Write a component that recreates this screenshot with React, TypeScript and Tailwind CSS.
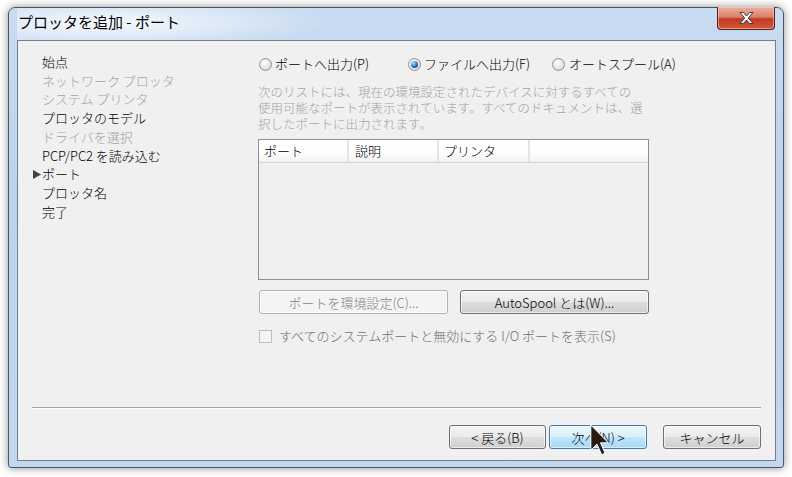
import React from "react";

const font = "font-['Noto_Sans_CJK_JP','Liberation_Sans',sans-serif]";

const steps: { label: string; disabled?: boolean; current?: boolean }[] = [
  { label: "始点" },
  { label: "ネットワーク プロッタ", disabled: true },
  { label: "システム プリンタ", disabled: true },
  { label: "プロッタのモデル" },
  { label: "ドライバを選択", disabled: true },
  { label: "PCP/PC2 を読み込む" },
  { label: "ポート", current: true },
  { label: "プロッタ名" },
  { label: "完了" },
];

function Radio({ checked }: { checked?: boolean }) {
  return (
    <span className="flex h-[13px] w-[13px] shrink-0 items-center justify-center rounded-full border border-[#8e8f8f] bg-[radial-gradient(circle_at_40%_35%,#ffffff,#cfcfcf)]">
      {checked && (
        <span className="h-[7px] w-[7px] rounded-full bg-[radial-gradient(circle_at_35%_30%,#a8e0ff,#1d6ab0_60%,#0c3d78)]" />
      )}
    </span>
  );
}

function Button({
  children,
  width,
  disabled,
  hover,
}: {
  children: React.ReactNode;
  width: string;
  disabled?: boolean;
  hover?: boolean;
}) {
  let cls = "border-[#707070] bg-[linear-gradient(180deg,#f2f2f2_0%,#ebebeb_48%,#dddddd_52%,#cfcfcf_100%)] text-black";
  if (disabled) cls = "border-[#adb2b5] bg-[#f4f4f4] text-[#838383]";
  if (hover) cls = "border-[#3c7fb1] bg-[linear-gradient(180deg,#eaf6fd_0%,#d9f0fc_48%,#bee6fd_52%,#a7d9f5_100%)] text-black";
  return (
    <div
      className={`flex h-[24px] items-center justify-center rounded-[3px] border text-[13px] leading-none shadow-[inset_0_0_0_1px_rgba(255,255,255,0.6)] ${width} ${cls}`}
    >
      {children}
    </div>
  );
}

export default function App() {
  return (
    <div className={`relative h-[477px] w-[792px] overflow-hidden bg-white pl-[8px] pt-[7px] font-light ${font}`}>
      {/* window */}
      <div className="flex h-[461px] w-[776px] flex-col rounded-t-[7px] rounded-b-[3px] border border-[#4a5666] bg-[linear-gradient(180deg,#c9dcf1_0%,#bcd3ec_40%,#c3d8ef_100%)] pb-[6px] pl-[8px] pr-[7px] shadow-[0_0_9px_rgba(0,0,0,0.45)]">
        {/* title bar */}
        <div className="flex h-[32px] items-start justify-between bg-[radial-gradient(ellipse_220px_26px_at_90px_15px,rgba(255,255,255,0.85),rgba(255,255,255,0))]">
          <div className="pl-[1px] pt-[3px] text-[15px] font-normal leading-[22px] text-black">プロッタを追加 - ポート</div>
          <div className="-mt-px mr-[1px] flex h-[23px] w-[58px] items-center justify-center rounded-b-[4px] border border-t-0 border-[#5a1e14] bg-[linear-gradient(180deg,#eab0a0_0%,#d9806a_45%,#c0391e_55%,#d4593c_100%)] shadow-[inset_0_0_0_1px_rgba(255,220,210,0.5)]">
            <svg width="17" height="14" viewBox="0 0 17 14">
              <path
                d="M2 1.5h3.2L8.5 5l3.3-3.5H15L10.3 7 15 12.5h-3.2L8.5 9l-3.3 3.5H2L6.7 7z"
                fill="#ffffff"
                stroke="#3b3b3b"
                strokeWidth="1"
                strokeLinejoin="round"
              />
            </svg>
          </div>
        </div>

        {/* client */}
        <div className="flex flex-1 flex-col border border-[#6f7f90] bg-[#f0f0f0]">
          <div className="flex flex-1">
            {/* steps */}
            <div className="w-[240px] pt-[12px] text-[13px] leading-[18.7px]">
              {steps.map((s) => (
                <div key={s.label} className="flex items-center whitespace-nowrap pl-[15px]">
                  <span className="flex w-[9px] shrink-0 items-center">
                    {s.current && (
                      <svg width="8" height="9" viewBox="0 0 8 9">
                        <path d="M0 0L8 4.5L0 9z" fill="#404040" />
                      </svg>
                    )}
                  </span>
                  <span className={s.disabled ? "text-[#a3a3a3]" : "text-black"}>{s.label}</span>
                </div>
              ))}
            </div>

            {/* right panel */}
            <div className="flex flex-col pt-[14px] text-[13px]">
              <div className="flex h-[18px] items-center">
                <label className="flex w-[150px] items-center gap-[3px] pl-px">
                  <Radio />
                  <span>ポートへ出力(P)</span>
                </label>
                <label className="flex w-[144px] items-center gap-[3px]">
                  <Radio checked />
                  <span>ファイルへ出力(F)</span>
                </label>
                <label className="flex items-center gap-[4px]">
                  <Radio />
                  <span>オートスプール(A)</span>
                </label>
              </div>

              <div className="mt-[11px] flex flex-col whitespace-nowrap text-[12.5px] leading-[16px] text-[#a3a3a3]">
                <span>次のリストには、現在の環境設定されたデバイスに対するすべての</span>
                <span>使用可能なポートが表示されています。すべてのドキュメントは、選</span>
                <span>択したポートに出力されます。</span>
              </div>

              {/* list */}
              <div className="mt-[7px] h-[141px] w-[391px] border border-[#8e8f8f] bg-[#f0f0f0]">
                <div className="flex h-[23px] border-b border-[#d5d5d5] bg-[linear-gradient(180deg,#ffffff_0%,#ffffff_50%,#f1f2f4_100%)] text-[13px]">
                  <div className="flex w-[90px] items-center border-r-2 border-[#e4e5e7] pl-[5px]">ポート</div>
                  <div className="flex w-[90px] items-center border-r-2 border-[#e4e5e7] pl-[6px]">説明</div>
                  <div className="flex w-[91px] items-center border-r-2 border-[#e4e5e7] pl-[5px]">プリンタ</div>
                  <div className="flex-1" />
                </div>
              </div>

              <div className="mt-[10px] flex gap-[12px] pl-px">
                <Button width="w-[189px]" disabled>
                  ポートを環境設定(C)...
                </Button>
                <Button width="w-[189px]">AutoSpool とは(W)...</Button>
              </div>

              <div className="mt-[14px] flex h-[16px] items-center gap-[7px] pl-px">
                <span className="h-[13px] w-[13px] border border-[#bcbcbc] bg-[#f4f4f4]" />
                <span className="text-[#6d6d6d]">すべてのシステムポートと無効にする I/O ポートを表示(S)</span>
              </div>
            </div>
          </div>

          {/* footer */}
          <div className="mx-[14px] border-t border-b border-t-[#a0a0a0] border-b-white" />
          <div className="flex justify-end pb-[11px] pr-[14px] pt-[16px]">
            <Button width="w-[97px]">&lt;&nbsp;戻る(B)</Button>
            <div className="ml-[3px]">
              <Button width="w-[98px]" hover>
                次へ(N)&nbsp;&gt;
              </Button>
            </div>
            <div className="ml-[16px]">
              <Button width="w-[98px]">キャンセル</Button>
            </div>
          </div>
        </div>
      </div>

      {/* mouse cursor */}
      <svg className="absolute left-[590px] top-[424px]" width="20" height="32" viewBox="0 0 12 19">
        <path
          d="M0.5 0.5L0.5 15.5L4.2 12L7 18.3L9 17.4L6.3 11.2L11 11.2Z"
          fill="#2b1a12"
          stroke="#ffffff"
          strokeWidth="0.6"
          strokeLinejoin="round"
        />
      </svg>
    </div>
  );
}
